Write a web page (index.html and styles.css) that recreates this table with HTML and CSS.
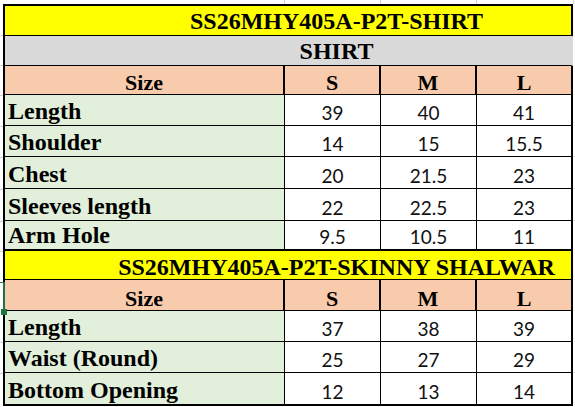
FILE: index.html
```html
<!DOCTYPE html>
<html lang="en">
<head>
<meta charset="utf-8">
<title>SS26MHY405A-P2T Size Chart</title>
<link rel="stylesheet" href="styles.css">
</head>
<body>
<div class="sheet">
  <div class="row yellow h30"><div class="cell span title">SS26MHY405A-P2T-SHIRT</div></div>
  <div class="row grey h30"><div class="cell span title">SHIRT</div></div>
  <div class="row hdr h29">
    <div class="cell head">Size</div><div class="cell head">S</div><div class="cell head">M</div><div class="cell head">L</div>
  </div>
  <div class="row data h31">
    <div class="cell label">Length</div><div class="cell num">39</div><div class="cell num">40</div><div class="cell num">41</div>
  </div>
  <div class="row data h31">
    <div class="cell label">Shoulder</div><div class="cell num">14</div><div class="cell num">15</div><div class="cell num">15.5</div>
  </div>
  <div class="row data h32">
    <div class="cell label">Chest</div><div class="cell num">20</div><div class="cell num">21.5</div><div class="cell num">23</div>
  </div>
  <div class="row data h32">
    <div class="cell label">Sleeves length</div><div class="cell num">22</div><div class="cell num">22.5</div><div class="cell num">23</div>
  </div>
  <div class="row data h30 thick">
    <div class="cell label">Arm Hole</div><div class="cell num">9.5</div><div class="cell num">10.5</div><div class="cell num">11</div>
  </div>
  <div class="row yellow h29"><div class="cell span title title2">SS26MHY405A-P2T-SKINNY SHALWAR</div></div>
  <div class="row hdr h31">
    <div class="cell head">Size</div><div class="cell head">S</div><div class="cell head">M</div><div class="cell head">L</div>
  </div>
  <div class="row data h31">
    <div class="cell label">Length</div><div class="cell num">37</div><div class="cell num">38</div><div class="cell num">39</div>
  </div>
  <div class="row data h31">
    <div class="cell label">Waist (Round)</div><div class="cell num">25</div><div class="cell num">27</div><div class="cell num">29</div>
  </div>
  <div class="row data h33 thick">
    <div class="cell label">Bottom Opening</div><div class="cell num">12</div><div class="cell num">13</div><div class="cell num">14</div>
  </div>
  <div class="selection"><span class="sel-tick"></span><span class="sel-handle"></span></div>
</div>
</body>
</html>
```

FILE: styles.css
```css
html, body {
  margin: 0;
}

body {
  padding: 4px 0 0 3px;
  width: 575px;
  height: 407px;
  box-sizing: border-box;
  overflow: hidden;
  background-color: #ffffff;
  background-image:
    linear-gradient(#d4d4d4, #d4d4d4),
    linear-gradient(#d4d4d4, #d4d4d4),
    linear-gradient(#d4d4d4, #d4d4d4),
    linear-gradient(#d4d4d4, #d4d4d4),
    linear-gradient(#d4d4d4, #d4d4d4),
    linear-gradient(#d4d4d4, #d4d4d4),
    linear-gradient(#d4d4d4, #d4d4d4),
    linear-gradient(#d4d4d4, #d4d4d4),
    linear-gradient(#d4d4d4, #d4d4d4),
    linear-gradient(#d4d4d4, #d4d4d4),
    linear-gradient(#d4d4d4, #d4d4d4),
    linear-gradient(#d4d4d4, #d4d4d4),
    linear-gradient(#d4d4d4, #d4d4d4),
    linear-gradient(#d4d4d4, #d4d4d4);
  background-repeat: no-repeat;
  background-size:
    1px 4px, 1px 4px, 1px 4px, 1px 4px,
    3px 1px, 3px 1px, 3px 1px, 3px 1px, 3px 1px,
    3px 1px, 3px 1px, 3px 1px, 3px 1px, 3px 1px;
  background-position:
    284px 0, 380px 0, 476px 0, 573px 0,
    0 35px, 0 65px, 0 95px, 0 126px, 0 157px,
    0 189px, 0 221px, 0 251px, 0 342px, 0 373px;
}

.sheet {
  position: relative;
  width: 570px;
  border-top: 2px solid #000;
  font-family: "Liberation Serif", "Times New Roman", serif;
  color: #000;
}

.row {
  display: grid;
  grid-template-columns: 280px 96px 96px 94px;
  box-sizing: border-box;
  border-style: solid;
  border-color: #000;
  border-width: 0 2px 1px 2px;
}

.row.thick {
  border-bottom-width: 2px;
}

.h29 { height: 29px; }
.h30 { height: 30px; }
.h31 { height: 31px; }
.h32 { height: 32px; }
.h33 { height: 33px; }

.yellow { background: #ffff00; }
.grey { background: #d9d9d9; border-right-color: #d9d9d9; }
.hdr { background: #f8cbad; }
.data { background: #ffffff; }

.cell {
  display: flex;
  align-items: flex-end;
  justify-content: center;
  box-sizing: border-box;
  border-right: 1px solid #000;
  white-space: nowrap;
  line-height: 1;
}

.cell:last-child {
  border-right: 0;
}

.hdr .cell {
  border-right-width: 2px;
}

.hdr .cell:last-child {
  border-right-width: 0;
}

.span {
  grid-column: 1 / -1;
  border-right: 0;
}

.title {
  font-size: 24px;
  font-weight: bold;
  padding: 0 0 2px 97px;
}

.title2 {
  padding-bottom: 0;
}

.head {
  font-size: 22px;
  font-weight: bold;
  padding-bottom: 0;
}

.data .cell:first-child {
  background: #e2efda;
}

.label {
  justify-content: flex-start;
  font-size: 24px;
  font-weight: bold;
  padding: 0 0 2px 3px;
}

.num {
  font-family: Lato, "Liberation Sans", sans-serif;
  font-size: 19px;
  color: #111;
  padding-bottom: 3px;
}

.selection {
  position: absolute;
  left: 0;
  top: 276px;
  width: 2px;
  height: 30px;
  background: #217346;
}

.sel-tick {
  position: absolute;
  left: -3px;
  top: 0;
  width: 4px;
  height: 1px;
  background: #217346;
}

.sel-handle {
  position: absolute;
  left: -2px;
  top: 27px;
  width: 6px;
  height: 6px;
  background: #217346;
}
```
